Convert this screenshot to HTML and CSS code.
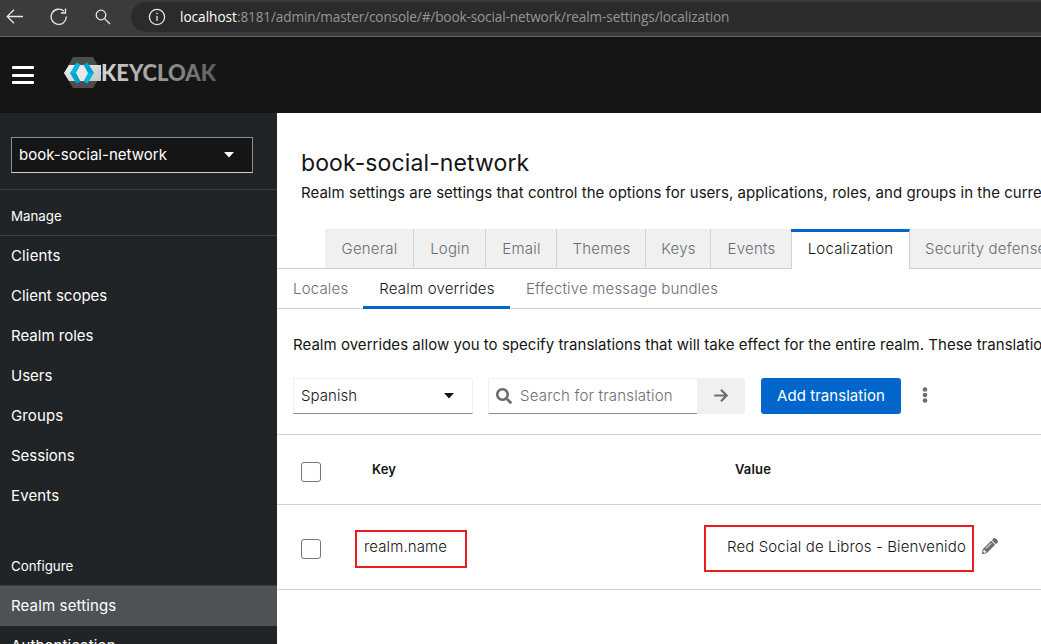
FILE: index.html
```html
<!DOCTYPE html>
<html lang="en">
<head>
<meta charset="utf-8">
<title>Realm settings</title>
<link rel="stylesheet" href="styles.css">
</head>
<body>
<div class="browser">
  <svg class="nav-icon back" width="18" height="18" viewBox="0 0 18 18"><path d="M17 8.500H1.500M8 1.700 1.200 8.500 8 15.300"/></svg>
  <svg class="nav-icon reload" width="18" height="18" viewBox="0 0 18 18"><path d="M16.300 8.500A7.600 7.600 0 1 1 14 3.300M15.500.600V5h-4.600"/></svg>
  <svg class="nav-icon find" width="16" height="16" viewBox="0 0 16 16"><circle cx="6" cy="6" r="4.800"/><path d="M9.600 9.600 15 15"/></svg>
  <div class="address">
    <svg class="nav-icon info" width="18" height="18" viewBox="0 0 18 18"><circle cx="9" cy="9" r="7.600"/><path d="M9 8v5M9 4.800v1.400"/></svg>
    <span class="url"><b>localhost</b>:8181/admin/master/console/#/book-social-network/realm-settings/localization</span>
  </div>
</div>
<header class="masthead">
  <div class="burger"><i></i><i></i><i></i></div>
  <svg class="logo" width="154" height="34" viewBox="0 0 154 34">
    <defs>
      <linearGradient id="word" gradientUnits="userSpaceOnUse" x1="36" y1="0" x2="153" y2="0"><stop offset="0" stop-color="#d8d8d8"/><stop offset="1" stop-color="#5c5c5c"/></linearGradient>
      <linearGradient id="band" x1="0" y1="0" x2="1" y2="1"><stop offset="0" stop-color="#f2f2f2"/><stop offset="1" stop-color="#c4c4c4"/></linearGradient>
    </defs>
    <path fill="#4d4d4d" d="M9 1h20l9 16-9 15H9L0 17z"/>
    <path fill="url(#band)" d="M5 9h32v16H5L0 17z"/>
    <path fill="#e8e8e8" d="M14 9h10l5 8-5 8H14l-5-8z"/>
    <path fill="#00b8e3" d="m12.500 6.500 4 2L12 17l4.500 8.500-4 2L6 17z"/>
    <path fill="#008aaa" d="m12 17-6 0 6.500 10.500 4-2z" opacity=".45"/>
    <path fill="#00b8e3" d="m23.500 6.500-4 2L24 17l-4.500 8.500 4 2L30 17z"/>
    <path fill="#008aaa" d="m24 17-4.500-8.500 4-2L30 17z" opacity=".45"/>
    <text class="wordmark" x="37" y="24.500" textLength="115" lengthAdjust="spacingAndGlyphs" fill="url(#word)">KEYCLOAK</text>
  </svg>
</header>
<div class="shell">
  <nav class="sidebar">
    <div class="realm-box"><div class="realm-select"><span>book-social-network</span><svg width="10" height="6" viewBox="0 0 10 6"><path fill="#fff" d="M0 0h10L5 5.500z"/></svg></div></div>
    <h2 class="group"><span>Manage</span></h2>
    <a class="item"><span class="wide">Clients</span></a>
    <a class="item"><span>Client scopes</span></a>
    <a class="item"><span>Realm roles</span></a>
    <a class="item"><span>Users</span></a>
    <a class="item"><span class="wide">Groups</span></a>
    <a class="item"><span>Sessions</span></a>
    <a class="item"><span class="wide">Events</span></a>
    <h2 class="group configure"><span>Configure</span></h2>
    <a class="item current"><span class="wide">Realm settings</span></a>
    <a class="item"><span class="wide">Authentication</span></a>
  </nav>
  <main class="content">
    <h1>book-social-network</h1>
    <p class="lead"><span>Realm settings are settings that control the options for users, applications, roles, and groups in the current realm.</span></p>
    <div class="tabs">
      <a class="tab general">General</a><a class="tab login">Login</a><a class="tab email">Email</a><a class="tab themes">Themes</a><a class="tab keys">Keys</a><a class="tab events">Events</a><a class="tab localization">Localization</a><a class="tab security">Security defenses</a>
    </div>
    <div class="subtabs">
      <a class="sub locales">Locales</a><a class="sub overrides">Realm overrides</a><a class="sub bundles">Effective message bundles</a>
    </div>
    <p class="note"><span>Realm overrides allow you to specify translations that will take effect for the entire realm. These translations</span></p>
    <div class="toolbar">
      <div class="language"><span>Spanish</span><svg width="10" height="6" viewBox="0 0 10 6"><path fill="#151515" d="M0 0h10L5 5.500z"/></svg></div>
      <div class="search"><svg width="16" height="16" viewBox="0 0 512 512"><path fill="#6a6e73" d="M505 442.700L405.300 343c-4.500-4.500-10.600-7-17-7H372c27.600-35.300 44-79.700 44-128C416 93.100 322.900 0 208 0S0 93.100 0 208s93.100 208 208 208c48.300 0 92.700-16.400 128-44v16.300c0 6.400 2.500 12.500 7 17l99.700 99.700c9.400 9.400 24.600 9.400 33.900 0l28.300-28.300c9.400-9.400 9.400-24.600.1-34zM208 336c-70.700 0-128-57.200-128-128 0-70.700 57.200-128 128-128 70.700 0 128 57.200 128 128 0 70.700-57.200 128-128 128z"/></svg><span>Search for translation</span></div>
      <div class="go"><svg width="16" height="16" viewBox="0 0 16 16"><path d="M1.200 7.500h12M8 1.700 13.700 7.500 8 13.300"/></svg></div>
      <div class="add"><span>Add translation</span></div>
      <svg class="kebab" width="6" height="16" viewBox="0 0 6 16"><circle cx="3" cy="2.500" r="2.300"/><circle cx="3" cy="8" r="2.300"/><circle cx="3" cy="13.500" r="2.300"/></svg>
    </div>
    <div class="row head"><i class="check"></i><span class="key">Key</span><span class="value">Value</span></div>
    <div class="row data"><i class="check"></i><div class="mark mark-key"><span>realm.name</span></div><div class="mark mark-value"><span>Red Social de Libros - Bienvenido</span></div><svg class="pencil" width="16" height="16" viewBox="0 0 512 512"><path fill="#6a6e73" d="M497.900 142.100l-46.100 46.100c-4.700 4.700-12.300 4.700-17 0l-111-111c-4.700-4.700-4.700-12.300 0-17l46.100-46.100c18.700-18.700 49.100-18.700 67.900 0l60.100 60.100c18.800 18.700 18.800 49.100 0 67.900zM284.200 99.800L21.600 362.400.400 483.900c-2.900 16.400 11.400 30.600 27.800 27.800l121.500-21.300 262.600-262.600c4.700-4.700 4.700-12.300 0-17l-111-111c-4.800-4.700-12.400-4.700-17.100 0zM124.100 339.900c-5.500-5.500-5.500-14.300 0-19.800l154-154c5.500-5.500 14.300-5.500 19.800 0s5.500 14.300 0 19.800l-154 154c-5.500 5.500-14.300 5.500-19.800 0zM88 424h48v36.300l-64.500 11.300-31.100-31.100L51.700 376H88v48z"/></svg></div>
  </main>
</div>
</body>
</html>
```
FILE: styles.css
```css
* { box-sizing: border-box; }
body { margin: 0; width: 1041px; height: 644px; overflow: hidden; background: #fff; color: #151515; font: 15px/24px Inter, "Open Sans", sans-serif; }
h1, h2, p { margin: 0; font-weight: 400; }
svg { display: block; flex: none; }
span { white-space: nowrap; }

.browser { height: 37px; background: #3b3b3b; border-bottom: 1px solid #666; display: flex; align-items: center; padding: 0 0 2px 6px; }
.nav-icon { fill: none; stroke: #e6e6e6; stroke-width: 1.3; }
.reload { margin-left: 26px; }
.find { margin-left: 27px; }
.address { margin-left: 20px; flex: 1; height: 30px; background: #2b2b2b; border-radius: 15px 0 0 15px; display: flex; align-items: center; padding-left: 17px; }
.url { margin-left: 14px; font: 13.6px/20px "Open Sans", sans-serif; color: #969696; letter-spacing: -.13px; }
.url b { font-weight: 400; color: #fff; letter-spacing: 0; }

.masthead { height: 76px; background: #151515; display: flex; padding-left: 12px; }
.burger { width: 22px; margin-top: 29px; display: flex; flex-direction: column; gap: 5px; }
.burger i { height: 3px; background: #fff; border-radius: 1px; flex: none; }
.burger i + i { margin-top: -.3px; }
.logo { margin: 19px 0 0 30px; }
.wordmark { font: 900 22px Lato, sans-serif; }

.shell { display: flex; height: 531px; }
.sidebar { width: 277px; flex: none; background: #212427; color: #fff; overflow: hidden; }
.realm-box { height: 77px; padding: 24px 0 0 11px; border-bottom: 1px solid #3c3f42; }
.realm-select { width: 242px; height: 36px; background: #151515; border: 1px solid #8a8d90; border-bottom-color: #d2d2d2; display: flex; align-items: center; justify-content: space-between; padding: 0 18px 0 7px; letter-spacing: .02px; }
.group { height: 46px; border-bottom: 1px solid #3c3f42; padding: 14px 0 0 11px; font-size: 13.3px; line-height: 24px; }
.configure { height: 70px; padding-top: 38px; }
.item { display: flex; align-items: center; height: 40px; padding-left: 11px; }
.wide { letter-spacing: .14px; }
.current { background: #4f5255; }

.content { flex: 1; min-width: 0; overflow: hidden; font-weight: 350; }
h1 { padding: 34px 0 0 24px; font-size: 23px; line-height: 32px; letter-spacing: .11px; }
.lead { padding: 2px 0 0 24px; height: 50px; }
.lead, .note { letter-spacing: .035px; }
.tabs { height: 40px; display: flex; padding-left: 48px; border-bottom: 1px solid #d2d2d2; color: #6a6e73; letter-spacing: .2px; }
.tab { flex: none; height: 39px; background: #f0f0f0; border-right: 1px solid #d2d2d2; padding: 8px 0 0 1px; text-align: center; white-space: nowrap; }
.general { width: 89px; } .login { width: 72px; } .email { width: 71px; } .themes { width: 89px; }
.keys { width: 65px; } .events { width: 80px; border-right: 0; }
.localization { width: 119px; height: 40px; background: linear-gradient(#d2d2d2, #d2d2d2) 0 0 / 1px 100% no-repeat #fff; border-top: 3px solid #06c; padding-top: 5px; color: #151515; }
.security { width: 160px; text-align: left; padding-left: 15px; }
.subtabs { height: 40px; display: flex; padding-left: 16px; border-bottom: 1px solid #d2d2d2; color: #6a6e73; letter-spacing: .18px; }
.sub { height: 40px; padding-top: 8px; white-space: nowrap; flex: none; }
.locales { width: 70px; }
.overrides { width: 147px; padding-left: 1px; text-align: center; color: #151515; border-bottom: 3px solid #06c; }
.bundles { margin-left: 16px; }
.note { padding: 24px 0 0 16px; height: 69px; }
.toolbar { display: flex; height: 57px; padding-left: 16px; border-bottom: 1px solid #d2d2d2; letter-spacing: .05px; }
.toolbar > div { height: 36px; display: flex; align-items: center; }
.language { width: 180px; border: 1px solid #f0f0f0; border-bottom-color: #8a8d90; justify-content: space-between; padding: 0 18px 0 7px; }
.search { margin-left: 15px; width: 209px; border: 1px solid #f0f0f0; border-right: 0; border-bottom-color: #8a8d90; color: #6a6e73; padding-left: 7px; gap: 8px; letter-spacing: .19px; }
.go { width: 48px; background: #f0f0f0; justify-content: center; }
.go path { fill: none; stroke: #6a6e73; stroke-width: 2.200; }
.add { width: 140px; margin-left: 16px; background: #06c; color: #fff; border-radius: 3px; justify-content: center; font-weight: 400; }
.kebab { margin: 9px 0 0 21px; fill: #6a6e73; }
.row { display: flex; border-bottom: 1px solid #d2d2d2; padding-left: 24px; }
.head { height: 70px; font-size: 13px; font-weight: 600; padding-top: 22px; letter-spacing: .15px; }
.check { width: 20px; height: 20px; border: 1px solid #767676; border-radius: 3px; flex: none; }
.head .check { margin-top: 5px; }
.key { width: 363px; margin-left: 51px; }
.data { height: 85px; }
.data .check { margin-top: 34px; }
.mark { border: 2px solid #e81c1c; flex: none; letter-spacing: .12px; }
.mark-key { width: 112px; height: 38px; margin: 25px 0 0 34px; padding: 3px 0 0 7px; }
.mark-value { width: 270px; height: 47px; margin: 20px 0 0 237px; padding: 8px 0 0 21px; }
.pencil { margin: 33px 0 0 8px; }
```
